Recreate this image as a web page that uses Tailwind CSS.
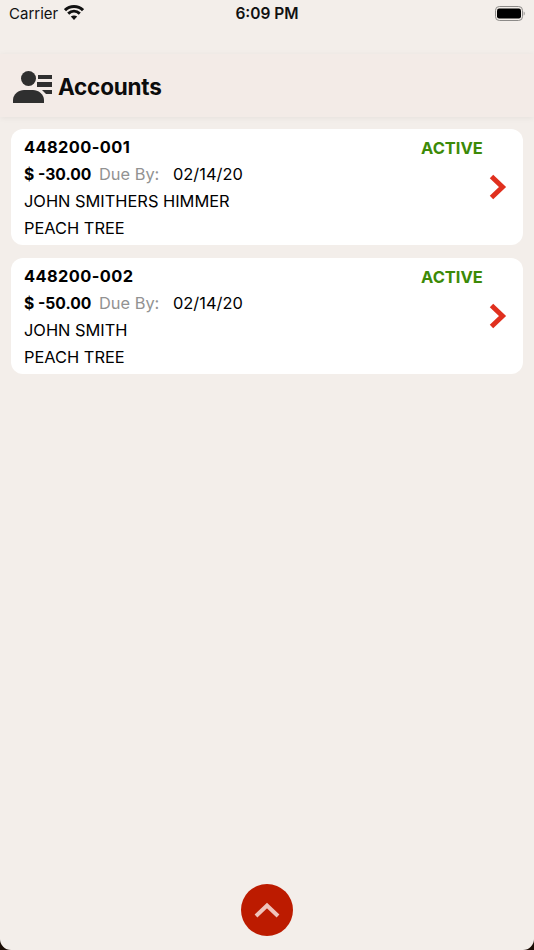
<!DOCTYPE html>
<html lang="en">
<head>
<meta charset="UTF-8">
<title>Accounts</title>
<script src="https://cdn.jsdelivr.net/npm/@tailwindcss/browser@4"></script>
</head>
<body class="bg-[#1a0d05] font-['Inter',sans-serif] text-black">
<div class="relative flex h-[950px] w-[534px] flex-col overflow-hidden rounded-b-[11px] bg-[#f3eeea]">
  <!-- Status bar -->
  <div class="relative flex h-[54px] shrink-0 items-start justify-between pl-[9px] pr-[9px] pt-[4px]">
    <div class="flex items-center gap-[6px] text-[15px] leading-[20px] text-[#111]">
      <span>Carrier</span>
      <svg width="20" height="15" viewBox="0 0 20 15" class="-mt-[4px]"><path d="M1 5.200C6 .4 14 .4 19 5.200" fill="none" stroke="#111" stroke-width="3"/><path d="M4.200 8.600c3.400-3.100 8.200-3.100 11.600 0" fill="none" stroke="#111" stroke-width="3"/><path d="M6.800 11.600c2-1.600 4.400-1.600 6.400 0L10 15z" fill="#111"/></svg>
    </div>
    <span class="absolute left-0 right-0 top-[4px] text-center text-[15.500px] font-semibold leading-[20px] text-[#111]">6:09 PM</span>
    <svg width="30" height="15" viewBox="0 0 30 15" class="mt-[2px]"><rect x=".5" y=".5" width="27" height="14" rx="3.800" fill="none" stroke="#8c8a88"/><rect x="2" y="2.500" width="24" height="10" rx="2.200" fill="#000"/><path d="M28.700 5.500v4c.6-.3 1-1.100 1-2s-.4-1.700-1-2z" fill="#8c8a88"/></svg>
  </div>
  <!-- Header -->
  <div class="flex h-[63px] shrink-0 items-center gap-[5px] bg-[#f3ebe7] pl-[13px] pt-[3px] shadow-[0_1px_6px_rgba(0,0,0,0.06)]">
    <svg width="40" height="32" viewBox="0 0 40 32"><circle cx="15.500" cy="7.500" r="7.500" fill="#2f2f2f"/><path d="M0 32v-3C0 23 6 19 11 19h9c5 0 11 4 11 10v3z" fill="#2f2f2f"/><path d="M25 4h14v4H25zM24 11h15v5H24zM29 19h10v4H33z" fill="#2f2f2f"/></svg>
    <span class="text-[22.500px] font-bold leading-none tracking-[-0.2px] text-[#0c0c0c]">Accounts</span>
  </div>
  <!-- Cards -->
  <div class="flex flex-col gap-[13px] px-[11px] pt-[12px]">
    <div class="flex h-[116px] rounded-[12px] bg-white pl-[13px] pr-[16px] pt-[5px]">
      <div class="flex-1 text-[16.400px] leading-[27px]">
        <div class="font-bold tracking-[0.4px]">448200-001</div>
        <div class="flex">
          <span class="w-[75px] text-[15.700px] font-bold">$ -30.00</span><span class="w-[74px] text-[#929292]">Due By:</span><span>02/14/20</span>
        </div>
        <div>JOHN SMITHERS HIMMER</div>
        <div>PEACH TREE</div>
      </div>
      <div class="flex w-[101px] flex-col items-start">
        <span class="pl-[15px] pt-[1px] text-[16.500px] font-bold leading-[27px] text-[#3c8a07]">ACTIVE</span>
        <svg width="18" height="26" viewBox="0 0 18 26" class="ml-[83px] mt-[12px]"><path d="M2.500 2.500L13.500 13 2.500 23.500" fill="none" stroke="#e0301e" stroke-width="5"/></svg>
      </div>
    </div>
    <div class="flex h-[116px] rounded-[12px] bg-white pl-[13px] pr-[16px] pt-[5px]">
      <div class="flex-1 text-[16.400px] leading-[27px]">
        <div class="font-bold tracking-[0.4px]">448200-002</div>
        <div class="flex">
          <span class="w-[75px] text-[15.700px] font-bold">$ -50.00</span><span class="w-[74px] text-[#929292]">Due By:</span><span>02/14/20</span>
        </div>
        <div>JOHN SMITH</div>
        <div>PEACH TREE</div>
      </div>
      <div class="flex w-[101px] flex-col items-start">
        <span class="pl-[15px] pt-[1px] text-[16.500px] font-bold leading-[27px] text-[#3c8a07]">ACTIVE</span>
        <svg width="18" height="26" viewBox="0 0 18 26" class="ml-[83px] mt-[12px]"><path d="M2.500 2.500L13.500 13 2.500 23.500" fill="none" stroke="#e0301e" stroke-width="5"/></svg>
      </div>
    </div>
  </div>
  <!-- Scroll up button -->
  <div class="mt-auto flex justify-center pb-[14px]">
    <div class="flex h-[52px] w-[52px] items-center justify-center rounded-full bg-[#bc1b00]">
      <svg width="28" height="16" viewBox="0 0 28 16"><path d="M3 14L14 3.500 25 14" fill="none" stroke="#efc4bb" stroke-width="4"/></svg>
    </div>
  </div>
</div>
</body>
</html>
